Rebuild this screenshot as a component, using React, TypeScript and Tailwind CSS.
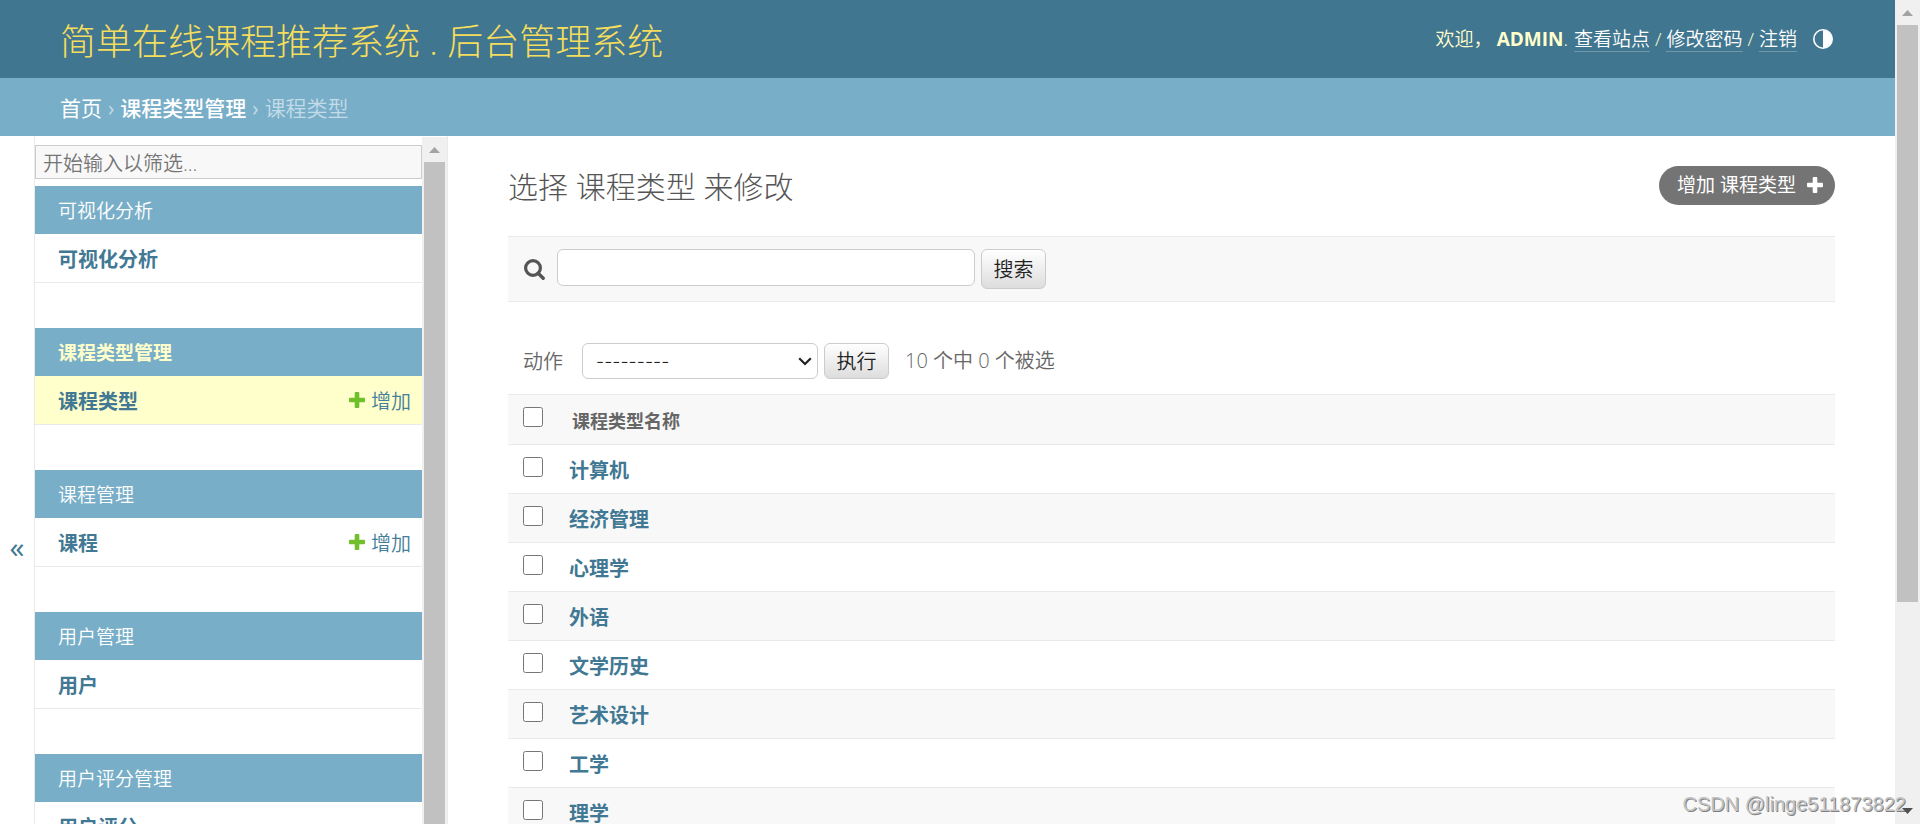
import React from "react";

const modules = [
  { caption: "可视化分析", model: "可视化分析", canAdd: false },
  { caption: "课程类型管理", model: "课程类型", canAdd: true, current: true },
  { caption: "课程管理", model: "课程", canAdd: true },
  { caption: "用户管理", model: "用户", canAdd: false },
  { caption: "用户评分管理", model: "用户评分", canAdd: false },
];

const courseTypes = ["计算机", "经济管理", "心理学", "外语", "文学历史", "艺术设计", "工学", "理学"];

const PlusIcon = ({ className }: { className: string }) => (
  <svg viewBox="0 0 16 16" className={className} aria-hidden="true">
    <path
      fill="currentColor"
      d="M6.700 0h2.600a1 1 0 0 1 1 1v4.700H15a1 1 0 0 1 1 1v2.600a1 1 0 0 1-1 1h-4.700V15a1 1 0 0 1-1 1H6.700a1 1 0 0 1-1-1v-4.700H1a1 1 0 0 1-1-1V6.700a1 1 0 0 1 1-1h4.700V1a1 1 0 0 1 1-1z"
    />
  </svg>
);

// Scroll rail with an up arrow and a thumb
const ScrollRail = ({ thumb }: { thumb: string }) => (
  <div className="w-[25px] shrink-0 h-full bg-[#f0f0f0] flex flex-col items-center">
    <div className="h-[25px] w-full shrink-0 flex items-center justify-center">
      <svg viewBox="0 0 11 6" className="w-[11px] h-[6px]" aria-hidden="true">
        <path d="M5.500 0L11 6H0z" fill="#a3a3a3" />
      </svg>
    </div>
    <div className={`w-[21px] bg-[#c1c1c1] ${thumb}`} />
  </div>
);

const Header = () => (
  <header className="h-[78px] shrink-0 px-[60px] bg-[#417690] flex items-center justify-between">
    <h1 className="pt-1.5 text-[36px] leading-[40px] font-light text-[#f5dd5d]">
      <a href="#">简单在线课程推荐系统 . 后台管理系统</a>
    </h1>
    <div className="flex items-center text-[19px] leading-6 font-[350] text-[#ffc]">
      <span>欢迎，</span>
      <strong className="ml-1 text-[19px] font-bold">ADMIN</strong>
      <span>.</span>
      <a href="#" className="ml-1.5 text-white border-b border-white/25">查看站点</a>
      <span className="mx-[5px]">/</span>
      <a href="#" className="text-white border-b border-white/25">修改密码</a>
      <span className="mx-[5px]">/</span>
      <a href="#" className="text-white border-b border-white/25">注销</a>
      <button type="button" aria-label="切换主题" className="ml-4 mr-0.5 text-white">
        <svg viewBox="0 0 20 20" className="w-5 h-5" aria-hidden="true">
          <circle cx="10" cy="10" r="9.200" fill="none" stroke="currentColor" strokeWidth="1.600" />
          <path d="M10 1a9 9 0 0 1 0 18z" fill="currentColor" />
        </svg>
      </button>
    </div>
  </header>
);

const Sidebar = () => (
  <nav className="w-[414px] shrink-0 flex border-x border-[#eaeaea]">
    <div className="flex-1 overflow-hidden pt-[9px]">
      <input
        type="text"
        aria-label="筛选导航项"
        placeholder="开始输入以筛选..."
        className="block w-full h-[34px] px-[7px] pt-0.5 mb-[7px] border border-[#ccc] bg-[#f8f8f8] text-[20px] font-[350] placeholder:text-[#757575]"
      />
      {modules.map((m) => (
        <section key={m.caption} className="mb-[45px]">
          <h2
            className={`h-12 px-[23px] pt-0.5 flex items-center bg-[#79aec8] text-[19px] ${
              m.current ? "font-bold text-[#ffc]" : "font-[350] text-white"
            }`}
          >
            <a href="#">{m.caption}</a>
          </h2>
          <div
            className={`h-[49px] pl-[23px] pr-[11px] pt-[3px] flex items-center justify-between border-b border-[#eaeaea] text-[20px] text-[#447e9b] ${
              m.current ? "bg-[#ffc]" : "bg-white"
            }`}
          >
            <a href="#" className="font-bold text-[#417893]">{m.model}</a>
            {m.canAdd && (
              <a href="#" className="flex items-center gap-1.5 font-[350]">
                <PlusIcon className="w-4 h-4 mb-1 text-[#70bf2b]" />
                增加
              </a>
            )}
          </div>
        </section>
      ))}
    </div>
    <div className="pt-px">
      <ScrollRail thumb="flex-1" />
    </div>
  </nav>
);

const buttonStyle =
  "w-[65px] pt-0.5 border border-[#ccc] rounded-md bg-linear-to-b from-white to-[#ddd] text-[20px] font-[350] text-[#222]";

const ChangeList = () => (
  <main className="flex-1 min-w-0 px-[60px] pt-[30px]">
    <div className="flex items-start justify-between h-[70px]">
      <h2 className="text-[30px] leading-[42px] font-light text-[#555]">选择 课程类型 来修改</h2>
      <a
        href="#"
        className="h-[39px] pl-[18px] pr-3 rounded-full bg-[#747474] flex items-center gap-[11px] text-[19px] text-white"
      >
        增加 课程类型
        <PlusIcon className="w-4 h-4 mb-0.5" />
      </a>
    </div>

    <form
      className="h-[66px] px-4 border-y border-[#eaeaea] bg-[#f8f8f8] flex items-start pt-3"
      onSubmit={(e) => e.preventDefault()}
    >
      <label htmlFor="searchbar" aria-label="搜索" className="mt-2.5 mr-3 text-[#555]">
        <svg viewBox="0 0 21 21" className="w-[21px] h-[21px]" aria-hidden="true">
          <circle cx="9" cy="9" r="7.400" fill="none" stroke="currentColor" strokeWidth="3.200" />
          <path d="M14.200 14.200l5 5" stroke="currentColor" strokeWidth="3.400" strokeLinecap="round" />
        </svg>
      </label>
      <input
        id="searchbar"
        type="text"
        className="w-[418px] h-[37px] px-2 mr-1.5 border border-[#ccc] rounded-md bg-white text-[20px]"
      />
      <button type="submit" className={`h-10 ${buttonStyle}`}>搜索</button>
    </form>

    <div className="pt-[41px] pb-[15px] pl-[15px] flex items-center text-[20px] font-[350] text-[#666]">
      <label htmlFor="action" className="pt-0.5">动作</label>
      <div className="relative ml-[19px] mr-1.5">
        <select
          id="action"
          className="block w-[236px] h-9 px-[13px] appearance-none border border-[#ccc] rounded-md bg-white font-['Inter','Noto_Sans_CJK_SC',sans-serif] text-[18px] text-[#222]"
        >
          <option>---------</option>
        </select>
        <svg viewBox="0 0 14 9" className="absolute right-[6px] top-[14px] w-[14px] h-[9px] pointer-events-none" aria-hidden="true">
          <path d="M1.200 1.200L7 7l5.800-5.800" fill="none" stroke="#222" strokeWidth="2.200" />
        </svg>
      </div>
      <button type="button" className={`h-9 ${buttonStyle}`}>执行</button>
      <span className="ml-4">10 个中 0 个被选</span>
    </div>

    <table className="w-full text-left text-[20px] leading-6">
      <thead>
        <tr className="h-[50px] bg-[#f8f8f8] border-y border-[#eaeaea]">
          <th className="w-[61px] pl-[15px] pt-3 align-top">
            <input type="checkbox" aria-label="全选" className="block w-5 h-5" />
          </th>
          <th className="pl-[3px] pt-0.5 text-[18px] font-bold text-[#666]">课程类型名称</th>
        </tr>
      </thead>
      <tbody>
        {courseTypes.map((name, i) => (
          <tr key={name} className={`h-[49px] border-b border-[#eaeaea] ${i % 2 ? "bg-[#f8f8f8]" : "bg-white"}`}>
            <td className="pl-[15px] pt-3 align-top">
              <input type="checkbox" aria-label={name} className="block w-5 h-5" />
            </td>
            <th scope="row" className="pt-1 font-bold text-[#417893]">
              <a href="#">{name}</a>
            </th>
          </tr>
        ))}
      </tbody>
    </table>
  </main>
);

const App: React.FC = () => {
  return (
    <div
      lang="zh-CN"
      className="relative h-screen flex overflow-hidden bg-white font-['Open_Sans','Noto_Sans_CJK_SC',sans-serif]"
    >
      <div className="flex-1 min-w-0 flex flex-col">
        <Header />
        <div className="h-[58px] pt-[3px] shrink-0 px-[60px] bg-[#79aec8] flex items-center gap-1.5 text-[21px] text-[#c4dce8]">
          <a href="#" className="text-white">首页</a>
          <span>›</span>
          <a href="#" className="font-medium text-white">课程类型管理</a>
          <span>›</span>
          <span className="font-[350]">课程类型</span>
        </div>
        <div className="flex-1 min-h-0 flex overflow-hidden">
          <button
            type="button"
            aria-label="切换导航"
            className="w-[34px] shrink-0 h-screen pb-1 text-[30px] text-[#417893]"
          >
            «
          </button>
          <Sidebar />
          <ChangeList />
        </div>
      </div>
      <ScrollRail thumb="h-[70%]" />
      <div className="absolute right-[14px] bottom-[6px] text-[20px] leading-7 text-[#c4c4c4] font-['Liberation_Sans',sans-serif] [text-shadow:1px_1px_0_#808080]">
        CSDN @linge511873822
      </div>
      <svg viewBox="0 0 11 6" className="absolute right-[7px] bottom-[10px] w-[11px] h-[6px]" aria-hidden="true">
        <path d="M0 0h11L5.500 6z" fill="#505050" />
      </svg>
    </div>
  );
};

export default App;
